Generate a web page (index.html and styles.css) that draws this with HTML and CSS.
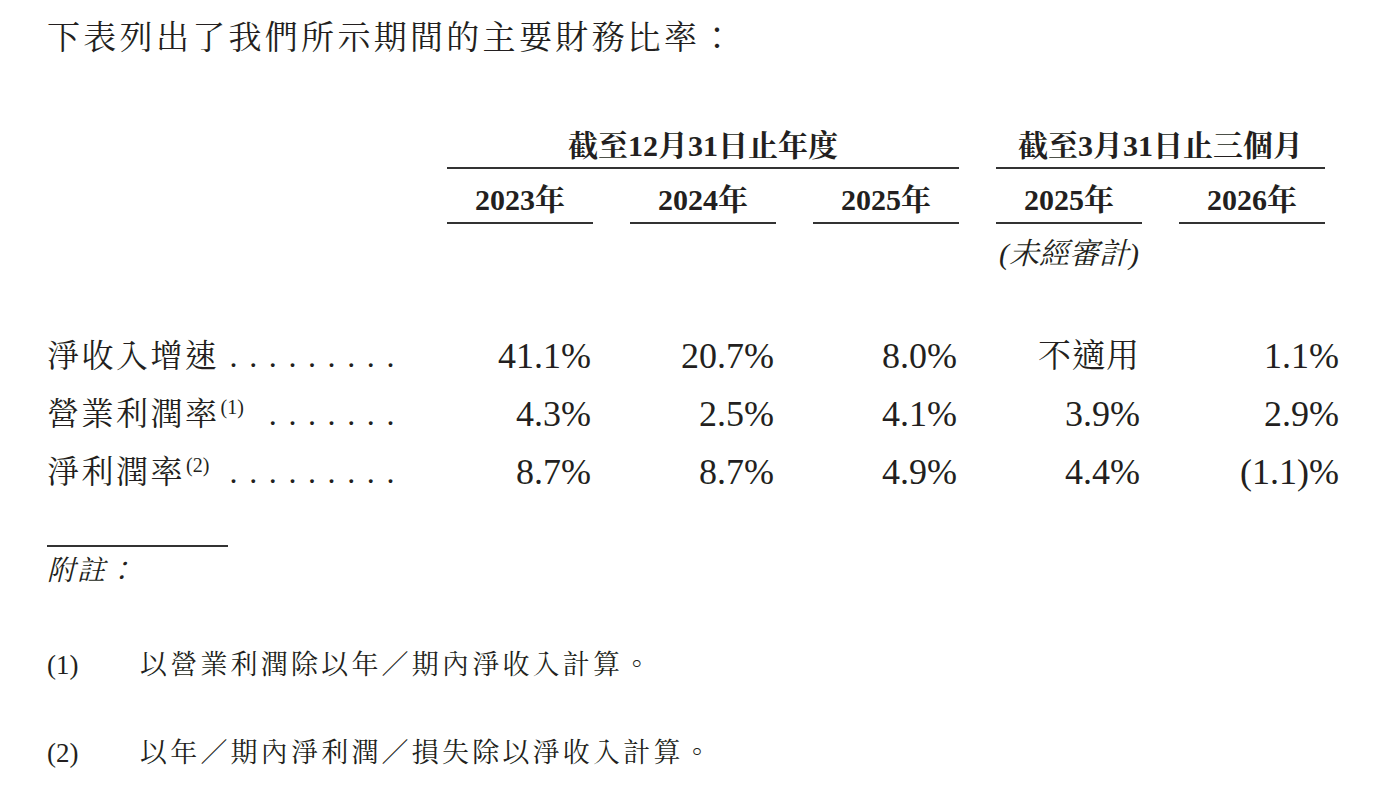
FILE: index.html
```html
<!DOCTYPE html>
<html lang="zh-Hant">
<head>
<meta charset="utf-8">
<title>主要財務比率</title>
<link rel="stylesheet" href="styles.css">
</head>
<body>
<div class="page">
  <h1 class="title">下表列出了我們所示期間的主要財務比率：</h1>

  <div class="ratios">
    <div class="group g1">截至12月31日止年度</div>
    <div class="group g2">截至3月31日止三個月</div>

    <div class="year c2">2023年</div>
    <div class="year c3">2024年</div>
    <div class="year c4">2025年</div>
    <div class="year c5">2025年</div>
    <div class="year c6">2026年</div>

    <div class="unaudited c5">(未經審計)</div>

    <div class="label r4"><span class="lt">淨收入增速</span><span class="dots">.........</span></div>
    <div class="val r4 c2">41.1%</div>
    <div class="val r4 c3">20.7%</div>
    <div class="val r4 c4">8.0%</div>
    <div class="val r4 c5 na">不適用</div>
    <div class="val r4 c6 last">1.1%</div>

    <div class="label r5"><span class="lt">營業利潤率<sup class="fn">(1)</sup></span><span class="dots">.......</span></div>
    <div class="val r5 c2">4.3%</div>
    <div class="val r5 c3">2.5%</div>
    <div class="val r5 c4">4.1%</div>
    <div class="val r5 c5">3.9%</div>
    <div class="val r5 c6 last">2.9%</div>

    <div class="label r6"><span class="lt">淨利潤率<sup class="fn">(2)</sup></span><span class="dots">.........</span></div>
    <div class="val r6 c2">8.7%</div>
    <div class="val r6 c3">8.7%</div>
    <div class="val r6 c4">4.9%</div>
    <div class="val r6 c5">4.4%</div>
    <div class="val r6 c6 last">(1.1)%</div>
  </div>

  <div class="rule"></div>
  <p class="notes-head">附註：</p>
  <div class="note n1"><span class="num">(1)</span><span class="txt">以營業利潤除以年／期內淨收入計算。</span></div>
  <div class="note n2"><span class="num">(2)</span><span class="txt">以年／期內淨利潤／損失除以淨收入計算。</span></div>
</div>
</body>
</html>
```

FILE: styles.css
```css
html, body {
  margin: 0;
  background: #ffffff;
}

body {
  color: #231f20;
  font-family: "Liberation Serif", "Noto Serif CJK TC", "Noto Sans CJK TC", serif;
}

.page {
  padding: 18px 0 0 47px;
}

.title {
  margin: 0;
  font-weight: normal;
  font-size: 33px;
  letter-spacing: 3.3px;
  line-height: 40px;
}

.ratios {
  display: grid;
  grid-template-columns: 363px repeat(5, 146px);
  column-gap: 37px;
  margin-top: 70px;
}

.group {
  font-weight: bold;
  font-size: 30px;
  line-height: 36px;
  text-align: center;
  padding-bottom: 3px;
  border-bottom: 2px solid #333;
}

.g1 { grid-column: 2 / span 3; grid-row: 1; }
.g2 { grid-column: 5 / span 2; grid-row: 1; }

.year {
  grid-row: 2;
  margin-top: 13px;
  font-weight: bold;
  font-size: 30px;
  line-height: 36px;
  text-align: center;
  padding-bottom: 4px;
  border-bottom: 2px solid #333;
}

.c2 { grid-column: 2; }
.c3 { grid-column: 3; }
.c4 { grid-column: 4; }
.c5 { grid-column: 5; }
.c6 { grid-column: 6; }

.r4 { grid-row: 4; margin-top: 55px; }
.r5 { grid-row: 5; }
.r6 { grid-row: 6; }

.unaudited {
  grid-row: 3;
  margin-top: 12px;
  font-style: italic;
  font-size: 30px;
  line-height: 36px;
  text-align: center;
}

.label {
  grid-column: 1;
  display: flex;
  align-items: baseline;
  white-space: nowrap;
  padding-right: 4px;
  font-size: 32px;
  letter-spacing: 2.5px;
  line-height: 58px;
}

.lt {
  flex: none;
}

.fn {
  font-size: 20px;
  letter-spacing: 0;
  vertical-align: 11px;
  line-height: 0;
  margin-left: 1px;
}

.dots {
  flex: none;
  margin-left: auto;
  letter-spacing: 11.6px;
}

.val {
  font-size: 36px;
  line-height: 58px;
  text-align: right;
  padding-right: 2px;
}

.na {
  font-size: 33px;
  letter-spacing: 1px;
}

.last {
  margin-right: -16px;
}

.rule {
  width: 181px;
  border-top: 2px solid #333;
  margin-top: 44px;
}

.notes-head {
  margin: 7px 0 0;
  font-style: italic;
  font-size: 28px;
  line-height: 34px;
  letter-spacing: 2px;
}

.note {
  display: flex;
  align-items: baseline;
  font-size: 27px;
  line-height: 34px;
}

.n1 { margin-top: 60px; }
.n2 { margin-top: 54px; }

.num {
  width: 93px;
  flex: none;
}

.txt {
  letter-spacing: 3.2px;
}
```
